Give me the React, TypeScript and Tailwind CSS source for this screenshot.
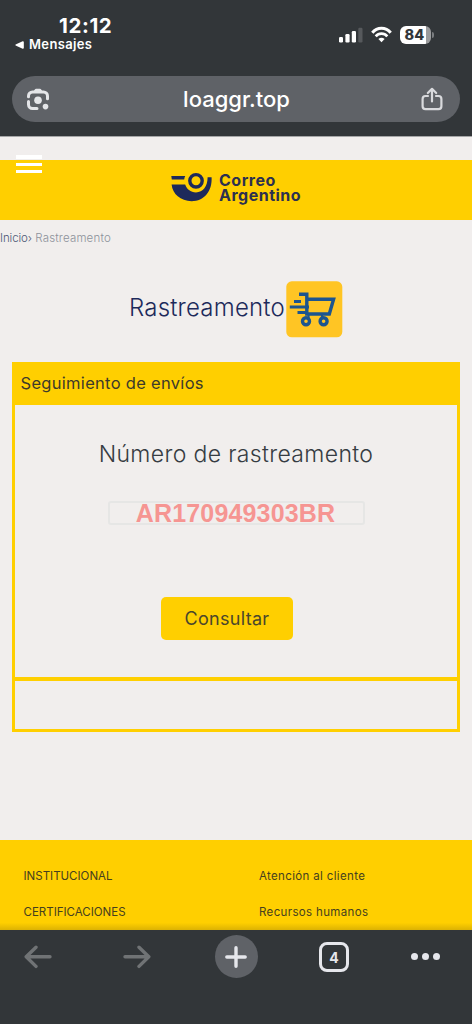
import React from 'react';

// ========================================================================
// Interfaces

interface FooterLink {
  left: string;
  right: string;
}

const FOOTER_LINKS: FooterLink[] = [
  { left: 'INSTITUCIONAL', right: 'Atención al cliente' },
  { left: 'CERTIFICACIONES', right: 'Recursos humanos' },
];

// ========================================================================
// Status bar
// ========================================================================

const StatusBar: React.FC = () => (
  <div className="flex h-[76px] justify-between pl-[15px] pr-[38.5px]">
    <div className="pt-[15px] text-white">
      <div className="pl-[44px] text-[20.5px] leading-[22px] font-bold tracking-[0.6px]">12:12</div>
      <div className="flex items-center gap-[5px] text-[13px] leading-[15px] font-semibold tracking-[0.35px]">
        <svg width="9" height="8" viewBox="0 0 9 8" fill="white">
          <path d="M.6 3.5 7.6.2Q8.8 0 8.8 1V7Q8.8 8 7.6 7.8L.6 4.6Q0 4 .6 3.5Z" />
        </svg>
        Mensajes
      </div>
    </div>

    <div className="flex items-start pt-[26px]">
      <svg width="24" height="18" viewBox="0 0 24 18">
        <rect x="0" y="11" width="4" height="5.5" rx="1.2" fill="white" />
        <rect x="6.4" y="8" width="4.2" height="8.5" rx="1.2" fill="white" />
        <rect x="12.8" y="5" width="4.2" height="11.5" rx="1.2" fill="white" />
        <rect x="19.3" y="1.7" width="4.2" height="14.8" rx="1.2" fill="#56595c" />
      </svg>
      <svg className="ml-[8px]" width="21" height="18" viewBox="0 0 21 18" fill="none" stroke="white">
        <path d="M1.3 6.7C6.2.8 14.8.8 19.7 6.7" strokeWidth="3" />
        <path d="M4.7 10.3C7.8 6.7 13.2 6.7 16.3 10.3" strokeWidth="2.7" />
        <path d="M10.5 16.2 7.4 13Q10.5 10.3 13.6 13Z" fill="white" stroke="none" />
      </svg>
      <div className="ml-[8px] flex items-center">
        <div className="flex h-[18px] w-[31px] items-center justify-center rounded-[6px] bg-[linear-gradient(90deg,#fff_84%,#9a9b9d_84%)] pr-[1px] text-[14.5px] font-extrabold tracking-[0.2px] text-[#323639]">
          84
        </div>
        <div className="ml-[1px] h-[6px] w-[2px] rounded-r-full bg-[#7a7d80]" />
      </div>
    </div>
  </div>
);

// ========================================================================
// Address bar
// ========================================================================

const AddressBar: React.FC = () => (
  <div className="mx-3 flex h-[46px] items-center justify-between rounded-full bg-[#5f6267] pr-[17px] pl-[14px]">
    <svg width="24" height="24" viewBox="0 0 24 24" fill="none" stroke="#e4e5e8" strokeWidth="3" strokeLinecap="round">
      <path d="M2.5 9.7V9A4 4 0 0 1 6.5 5H17.5A4 4 0 0 1 21.5 9V11.8" />
      <path d="M2.5 14.5V17.5A4 4 0 0 0 6.5 21.5H11" />
      <path d="M7.8 4 9 2.2Q9.3 1.7 10 1.7H14Q14.7 1.7 15 2.2L16.2 4Z" fill="#e4e5e8" stroke="none" />
      <circle cx="12" cy="13.3" r="3.8" fill="#e4e5e8" stroke="none" />
      <circle cx="19.5" cy="19.6" r="2.8" fill="#e4e5e8" stroke="none" />
    </svg>
    <span className="pb-[1px] pl-[2px] text-[22px] leading-none font-medium text-white">loaggr.top</span>
    <svg width="22" height="24" viewBox="0 0 22 24" fill="none" stroke="#d9dadd" strokeWidth="2.2" strokeLinecap="round" strokeLinejoin="round">
      <path d="M7 9H4.5Q1.6 9 1.6 11.9V19.3Q1.6 22.2 4.5 22.2H17.5Q20.4 22.2 20.4 19.3V11.9Q20.4 9 17.5 9H15" />
      <path d="M11 14.5V2.2M6.8 6 11 1.8 15.2 6" />
    </svg>
  </div>
);

// ========================================================================
// Site header
// ========================================================================

const SiteHeader: React.FC = () => (
  <header className="relative mt-[23px] flex h-[60px] items-start bg-[#ffcf00] pt-[12px] pl-[171px]">
    <div className="absolute -top-[5px] left-[16px] flex w-[26px] flex-col gap-[3.5px]">
      <span className="h-[4px] bg-white" />
      <span className="h-[3.5px] bg-white" />
      <span className="h-[3.5px] bg-white" />
    </div>
    <svg width="42" height="30" viewBox="0 0 42 30" fill="#1d2a5b">
      <path d="M.3 4.1H14.2Q13.3 5.7 13.2 7.5H.8Z" />
      <circle cx="25" cy="8.8" r="6.2" fill="none" stroke="#1d2a5b" strokeWidth="3.4" />
      <path d="M.6 12.6H14.2C15.4 17 19.6 20.4 25 20.4C32 20.4 36.6 14.5 36.6 5.3H40.6C41.4 19.5 33 29.2 20.7 29.2C9.5 29.2 1.5 22 .6 12.6Z" />
    </svg>
    <div className="mt-[1px] ml-[6px] flex flex-col text-[16px] leading-[15px] font-bold tracking-[0.5px] text-[#2c3050]">
      <span>Correo</span>
      <span>Argentino</span>
    </div>
  </header>
);

const CartIcon: React.FC = () => (
  <svg width="57" height="57" viewBox="0 0 57 57" fill="none">
    <rect x="0.3" y="0.3" width="56" height="56" rx="5.5" fill="#ffc524" />
    <g stroke="#1d558f" strokeWidth="3">
      <path d="M13 13.3H20.8V33H43.3L47.6 18.2H20.8" strokeWidth="3.4" />
      <path d="M8 20.5H15M3.8 26H23M11.5 31.5H20" />
      <circle cx="20" cy="40.3" r="3.5" strokeWidth="3.4" />
      <circle cx="37.6" cy="40.3" r="3.5" strokeWidth="3.4" />
      <path d="M22.5 34V38M36 34V38" strokeWidth="2.2" />
    </g>
  </svg>
);

// ========================================================================
// Tracking card
// ========================================================================

const TrackingCard: React.FC = () => (
  <section className="mx-3 mt-[24px] border-[3px] border-t-0 border-[#ffcf00]">
    <div className="flex h-[43px] items-center bg-[#ffcf00] pb-[1px] pl-[5.5px] text-[16.5px] tracking-[0.3px] text-[#3d3a2b]">
      Seguimiento de envíos
    </div>
    <div className="flex h-[272px] flex-col items-center pt-[34px]">
      <h2 className="text-[23px] leading-[30px] font-light tracking-[0.35px] text-[#363c42]">
        Número de rastreamento
      </h2>
      <div className="mt-[32px] flex h-[24px] w-[257px] items-center justify-center rounded-[3px] border-2 border-[#e6e6e5] pr-[1px] font-['Liberation_Sans',sans-serif] text-[25px] leading-none font-bold tracking-[0.15px] text-[#f69592]">
        AR170949303BR
      </div>
      <button className="mt-[72px] mr-[18px] h-[43px] w-[132px] rounded-[5px] bg-[#ffcf00] text-[18px] tracking-[0.3px] text-[#4a462c]">
        Consultar
      </button>
    </div>
    <div className="h-[52px] border-t-4 border-[#ffcf00]" />
  </section>
);

// ========================================================================
// Browser toolbar
// ========================================================================

const BottomBar: React.FC = () => (
  <nav className="flex h-[94px] items-start bg-[#323639] pt-[5px] pl-[24px]">
    <svg className="mt-[10px]" width="28" height="24" viewBox="0 0 28 24" fill="none" stroke="#707375" strokeWidth="3.4" strokeLinecap="round" strokeLinejoin="round">
      <path d="M26 11.8H2.2M12 2.2 2.2 11.8 12 21.4" />
    </svg>
    <svg className="mt-[10px] ml-[71px]" width="28" height="24" viewBox="0 0 28 24" fill="none" stroke="#707375" strokeWidth="3.4" strokeLinecap="round" strokeLinejoin="round">
      <path d="M2 11.8H25.8M16 2.2 25.8 11.8 16 21.4" />
    </svg>
    <div className="ml-[63.5px] flex size-[43px] items-center justify-center rounded-full bg-[#5f6267]">
      <svg width="22" height="22" viewBox="0 0 22 22" stroke="#e6e7ec" strokeWidth="3.4" strokeLinecap="round">
        <path d="M11 1.8V20.2M1.8 11H20.2" />
      </svg>
    </div>
    <div className="mt-[7px] ml-[61.5px] flex size-[30px] items-center justify-center rounded-[8px] border-[3px] border-[#e6e7ec] text-[14px] font-bold text-[#e6e7ec]">
      4
    </div>
    <div className="mt-[18px] ml-[62px] flex gap-[4px]">
      <span className="size-[7px] rounded-full bg-[#e6e7ec]" />
      <span className="size-[7px] rounded-full bg-[#e6e7ec]" />
      <span className="size-[7px] rounded-full bg-[#e6e7ec]" />
    </div>
  </nav>
);

// ========================================================================
// App
// ========================================================================

const App: React.FC = () => {
  return (
    <div className="flex h-[1024px] w-[472px] flex-col overflow-hidden bg-[#f1eeed] font-['Inter',sans-serif]">
      <div className="h-[137px] shrink-0 border-b border-[#a5a6a7] bg-[#323639]">
        <StatusBar />
        <AddressBar />
      </div>

      <main className="flex flex-1 flex-col">
        <SiteHeader />
        <div className="mt-[10px] text-[11.5px] leading-[16px] font-light tracking-[0.17px] text-[#8d929b]">
          <span className="tracking-[-0.1px] text-[#4d5875]">Inicio›</span> Rastreamento
        </div>
        <div className="mt-[35px] flex items-center pl-[129px]">
          <h1 className="w-[156.5px] pb-[4px] text-[24px] font-light tracking-[0.2px] text-[#1d2a5b]">Rastreamento</h1>
          <CartIcon />
        </div>
        <TrackingCard />

        <footer className="mt-auto h-[90px] bg-[linear-gradient(180deg,#ffcf00_92%,#dcb203_100%)] pt-[27px] pl-[23.5px] text-[11.5px] leading-[18px] text-[#45401f]">
          {FOOTER_LINKS.map((row) => (
            <div key={row.left} className="mb-[18px] flex">
              <span className="w-[235.5px]">{row.left}</span>
              <span className="tracking-[0.35px]">{row.right}</span>
            </div>
          ))}
        </footer>
      </main>

      <BottomBar />
    </div>
  );
};

export default App;
